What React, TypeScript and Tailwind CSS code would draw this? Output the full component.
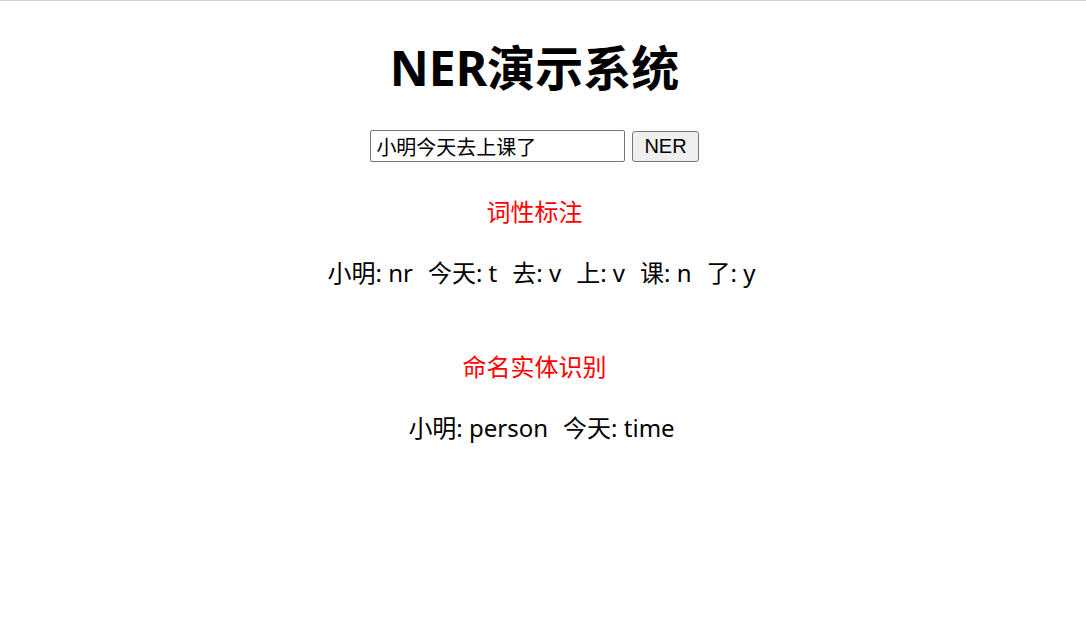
import React from "react";

const pos = [
  "小明: nr",
  "今天: t",
  "去: v",
  "上: v",
  "课: n",
  "了: y",
];
const ner = ["小明: person", "今天: time"];

export default function App() {
  return (
    <div className="w-[1086px] h-[635px] bg-white border-t border-[#d4d4d8]">
      <div className="w-[1069px] flex flex-col items-center text-black font-['Noto_Sans','Noto_Sans_CJK_SC',sans-serif]">
        <h1 className="mt-[31px] h-[72px] leading-[72px] text-[48px] font-bold">NER演示系统</h1>
        <div className="mt-[26px] flex items-center gap-[7px]">
          <input
            defaultValue="小明今天去上课了"
            className="w-[255px] h-[32px] border border-[#767676] rounded-[2px] px-[5px] text-[20px] leading-[30px] outline-none font-['Noto_Sans_CJK_SC',sans-serif]"
          />
          <button className="h-[31px] px-[11px] border border-[#767676] rounded-[3px] bg-[#efefef] text-[20px] leading-[28px] font-['Liberation_Sans',sans-serif]">
            NER
          </button>
        </div>
        <div className="mt-[32px] h-[36px] leading-[36px] text-[24px] text-[#ff0000]">词性标注</div>
        <div className="mt-[25px] h-[36px] leading-[36px] text-[24px] flex gap-[15px] pl-[14px] whitespace-pre">
          {pos.map((p) => (
            <span key={p}>{p}</span>
          ))}
        </div>
        <div className="mt-[58px] h-[36px] leading-[36px] text-[24px] text-[#ff0000]">命名实体识别</div>
        <div className="mt-[25px] h-[36px] leading-[36px] text-[24px] flex gap-[15px] pl-[14px] whitespace-pre">
          {ner.map((p) => (
            <span key={p}>{p}</span>
          ))}
        </div>
      </div>
    </div>
  );
}
